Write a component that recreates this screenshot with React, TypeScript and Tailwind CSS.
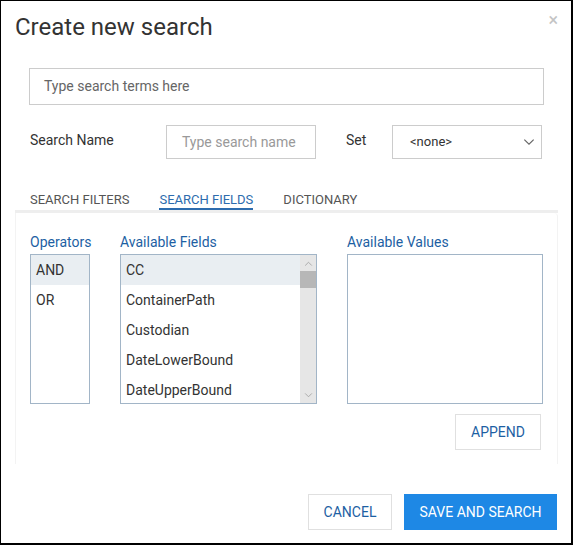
import React from 'react';

// Create new search dialog
const operators = ['AND', 'OR'];
const fields = ['CC', 'ContainerPath', 'Custodian', 'DateLowerBound', 'DateUpperBound'];

function Chevron({ up = false, className = '' }: { up?: boolean; className?: string }) {
  return (
    <svg width="10" height="6" viewBox="0 0 10 6" className={className}>
      <path
        d={up ? 'M1 5.5 L5 1.5 L9 5.5' : 'M1 0.5 L5 4.5 L9 0.5'}
        fill="none"
        stroke="currentColor"
        strokeWidth="1"
      />
    </svg>
  );
}

export default function App() {
  return (
    <div
      className="relative w-[573px] h-[545px] bg-white border-t border-l border-r-2 border-b-2 border-black text-[#333]"
      style={{ fontFamily: 'Roboto, "Liberation Sans", sans-serif' }}
    >
      {/* close */}
      <div className="absolute right-[13px] top-[10px] text-[#c4c4c4] text-[18px] leading-[18px]">×</div>

      {/* title */}
      <h1 className="pt-[11px] pl-[14px] text-[24px] leading-[30px] font-normal text-[#333]">
        Create new search
      </h1>

      {/* search terms */}
      <div className="mt-[26px] ml-[28px] w-[515px] h-[37px] border border-[#ccc] flex items-center pl-[14px] text-[14px] text-[#666]">
        Type search terms here
      </div>

      {/* name row */}
      <div className="mt-[20px] ml-[29px] flex items-center h-[34px] text-[14px]">
        <span className="w-[136px] -mt-[3px]">Search Name</span>
        <div className="w-[150px] h-[34px] border border-[#ccc] flex items-center pl-[15px] text-[#999]">
          Type search name
        </div>
        <span className="ml-[30px] w-[46px] -mt-[3px]">Set</span>
        <div className="w-[150px] h-[34px] border border-[#ccc] flex items-center justify-between pl-[17px] pr-[6px] text-[13px]">
          <span>&lt;none&gt;</span>
          <Chevron className="text-[#666] w-[12px] h-[7px]" />
        </div>
      </div>

      {/* tabs */}
      <div className="mt-[33px] ml-[14px] w-[543px] flex border-b-[3px] border-[#eee] text-[13px] leading-[16px] uppercase">
        <div className="ml-[15px] text-[#555] pb-[2px]">Search Filters</div>
        <div className="ml-[30px] text-[#2d6cae] border-b-[2px] border-[#2d6cae]">Search Fields</div>
        <div className="ml-[30px] text-[#555] pb-[2px]">Dictionary</div>
      </div>

      {/* panel */}
      <div className="ml-[14px] w-[543px] h-[251px] border-l border-r border-[#f3f3f3] rounded-tr-[4px] pt-[21px] pl-[14px]">
        <div className="flex">
          <div className="w-[60px]">
            <div className="text-[14px] leading-[16px] text-[#1d5fa3] whitespace-nowrap">Operators</div>
            <div className="mt-[4px] h-[150px] border border-[#a2b5c7] text-[14px]">
              {operators.map((o, i) => (
                <div
                  key={o}
                  className={`h-[30px] flex items-center pl-[5px] ${i === 0 ? 'bg-[#e9eef2]' : ''}`}
                >
                  {o}
                </div>
              ))}
            </div>
          </div>

          <div className="ml-[30px] w-[197px]">
            <div className="text-[14px] leading-[16px] text-[#1d5fa3] whitespace-nowrap">Available Fields</div>
            <div className="mt-[4px] h-[150px] border border-[#a2b5c7] text-[14px] flex">
              <div className="flex-1">
                {fields.map((f, i) => (
                  <div
                    key={f}
                    className={`h-[30px] flex items-center pl-[5px] ${i === 0 ? 'bg-[#e9eef2]' : ''}`}
                  >
                    {f}
                  </div>
                ))}
              </div>
              <div className="w-[16px] bg-[#e6e6e6] flex flex-col items-center">
                <div className="h-[16px] flex items-center justify-center text-[#a0a0a0]">
                  <Chevron up className="w-[9px] h-[5px]" />
                </div>
                <div className="w-full h-[17px] bg-[#b7b7b7]" />
                <div className="flex-1" />
                <div className="h-[16px] flex items-center justify-center text-[#a0a0a0]">
                  <Chevron className="w-[9px] h-[5px]" />
                </div>
              </div>
            </div>
          </div>

          <div className="ml-[30px] w-[196px]">
            <div className="text-[14px] leading-[16px] text-[#1d5fa3] whitespace-nowrap">Available Values</div>
            <div className="mt-[4px] h-[150px] border border-[#a2b5c7]" />
          </div>
        </div>

        <div className="flex justify-end pr-[16px] mt-[10px]">
          <button className="w-[86px] h-[36px] border border-[#e0e0e0] text-[14px] text-[#1d5fa3] uppercase">
            Append
          </button>
        </div>
      </div>

      {/* footer */}
      <div className="mt-[30px] flex justify-end pr-[14px] gap-[12px] text-[14px] uppercase">
        <button className="w-[84px] h-[36px] border border-[#e0e0e0] text-[#1d5fa3] uppercase">Cancel</button>
        <button className="w-[153px] h-[36px] bg-[#1e88e5] text-white uppercase">Save and Search</button>
      </div>
    </div>
  );
}
